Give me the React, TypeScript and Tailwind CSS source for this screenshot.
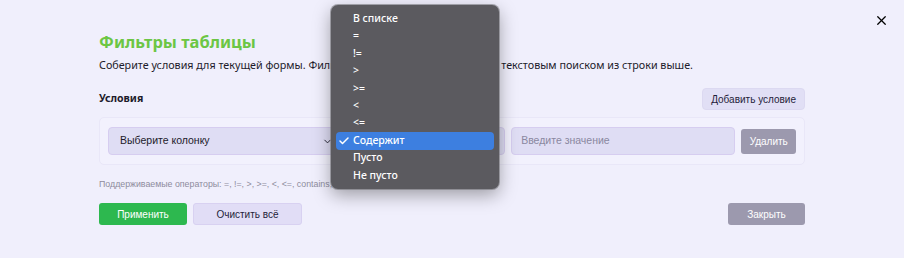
import { X, ChevronDown, Check } from 'lucide-react'

const operators = ['В списке', '=', '!=', '>', '>=', '<', '<=', 'Содержит', 'Пусто', 'Не пусто']

function OperatorMenu({ selected }: { selected: string }) {
  return (
    <div className="absolute left-[331px] top-[5px] w-[168px] rounded-[7px] bg-[#5b5a5f] pt-[5px] pb-[5px] px-[5px] shadow-[0_6px_18px_rgba(0,0,0,0.35)] ring-1 ring-[#77767b]/60">
      {operators.map((op) => (
        <div
          key={op}
          className={`relative flex h-[17.45px] items-center rounded-[4px] pl-[17px] text-[10.5px] font-medium text-white ${
            op === selected ? 'bg-[#3d7fe0]' : ''
          }`}
        >
          {op === selected && <Check className="absolute left-[2px] h-[12px] w-[12px]" strokeWidth={3} />}
          {op}
        </div>
      ))}
    </div>
  )
}

export default function App() {
  return (
    <div className="relative h-[258px] w-[904px] overflow-hidden bg-[#f0effc] font-['Noto_Sans',sans-serif] text-[#1d1b2b]">
      <button className="absolute right-[15px] top-[13px] text-black">
        <X className="h-[15px] w-[15px]" strokeWidth={2} />
      </button>

      <div className="flex flex-col px-[99px] pt-[30px]">
        <h2 className="text-[16.5px] font-bold leading-[24px] text-[#6cc644]">Фильтры таблицы</h2>
        <p className="mt-[4px] text-[10.75px] leading-[14px]">
          Соберите условия для текущей формы. Фильтры объединяются с основным текстовым поиском из строки выше.
        </p>

        <div className="mt-[16px] flex items-center justify-between">
          <span className="text-[10.5px] font-bold">Условия</span>
          <button className="h-[22px] rounded-[4px] border border-[#dcd9f1] bg-[#e1dff5] px-[8px] font-['Liberation_Sans',sans-serif] text-[10px] text-[#1f1d3a]">
            Добавить условие
          </button>
        </div>

        <div className="mt-[7px] flex items-center gap-[6px] rounded-[5px] border border-[#e9e7f8] bg-[#f2f1fd] px-[8px] py-[9px] font-['Liberation_Sans',sans-serif] text-[10.5px]">
          <div className="flex h-[28px] w-[231px] items-center justify-between rounded-[4px] border border-[#d6cdf0] bg-[#dfddf4] pl-[11px] pr-[3px]">
            <span>Выберите колонку</span>
            <ChevronDown className="h-[11px] w-[11px]" strokeWidth={2} />
          </div>
          <div className="flex h-[28px] w-[163px] items-center justify-between rounded-[4px] border border-[#d6cdf0] bg-[#dfddf4] pl-[11px] pr-[3px]">
            <span>Содержит</span>
            <ChevronDown className="h-[11px] w-[11px]" strokeWidth={2} />
          </div>
          <div className="flex h-[28px] w-[226px] items-center rounded-[4px] border border-[#d6cdf0] bg-[#dfddf4] pl-[9px] text-[#8a88a0]">
            Введите значение
          </div>
          <button className="h-[25px] w-[55px] rounded-[3px] bg-[#9c99ae] text-[10px] text-white">Удалить</button>
        </div>

        <p className="mt-[13px] font-['Liberation_Sans',sans-serif] text-[8.8px] text-[#8e8c9c]">
          Поддерживаемые операторы: =, !=, &gt;, &gt;=, &lt;, &lt;=, contains, in, empty, not empty.
        </p>

        <div className="mt-[12px] flex items-center font-['Liberation_Sans',sans-serif] text-[10px]">
          <button className="h-[22px] w-[88px] rounded-[3px] bg-[#2db84f] text-white">Применить</button>
          <button className="ml-[6px] h-[22px] w-[109px] rounded-[3px] border border-[#d8d1f1] bg-[#e1ddf6] text-[#1f1d3a]">
            Очистить всё
          </button>
          <button className="ml-auto h-[22px] w-[77px] rounded-[3px] bg-[#9c99ae] text-white">Закрыть</button>
        </div>
      </div>

      <OperatorMenu selected="Содержит" />
    </div>
  )
}
